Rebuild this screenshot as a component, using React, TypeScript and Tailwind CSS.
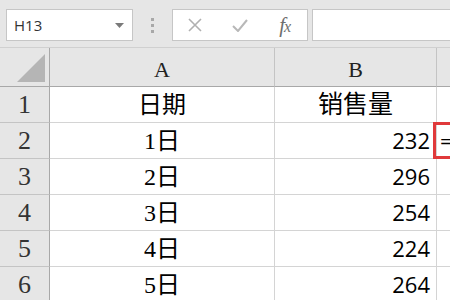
import React from 'react';

const rows = [
  { n: '1', a: '日期', b: '销售量' },
  { n: '2', a: '1日', b: '232' },
  { n: '3', a: '2日', b: '296' },
  { n: '4', a: '3日', b: '254' },
  { n: '5', a: '4日', b: '224' },
  { n: '6', a: '5日', b: '264' },
];

const serif = "font-['Liberation_Serif','Noto_Sans_CJK_SC',serif]";

const Toolbar: React.FC = () => (
  <div className="h-[48px] bg-[#e6e6e6] flex items-start pt-[9px] pl-[6px] border-b border-[#d0d0d0]">
    <div className="w-[127px] h-[32px] bg-white border border-[#c6c6c6] flex items-center justify-between pl-[7px] pr-[8px]">
      <span className="font-['Open_Sans',sans-serif] text-[15px] text-[#333]">H13</span>
      <svg width="9" height="5" viewBox="0 0 9 5">
        <path d="M0 0 L9 0 L4.5 5 Z" fill="#7a7a7a" />
      </svg>
    </div>
    <div className="w-[39px] h-[32px] flex flex-col items-center justify-center gap-[3px]">
      <div className="w-[3px] h-[3px] bg-[#a8a8a8]" />
      <div className="w-[3px] h-[3px] bg-[#a8a8a8]" />
      <div className="w-[3px] h-[3px] bg-[#a8a8a8]" />
    </div>
    <div className="w-[136px] h-[32px] bg-white border border-[#c6c6c6] flex items-center">
      <div className="w-[45px] flex justify-center">
        <svg width="14" height="14" viewBox="0 0 14 14">
          <path d="M1 1 L13 13 M13 1 L1 13" stroke="#b0b0b0" strokeWidth="1.6" fill="none" />
        </svg>
      </div>
      <div className="w-[45px] flex justify-center">
        <svg width="16" height="13" viewBox="0 0 16 13">
          <path d="M1 7 L6 12 L15 1" stroke="#b8b8b8" strokeWidth="2" fill="none" />
        </svg>
      </div>
      <div className="w-[45px] flex justify-center">
        <span className="font-['Liberation_Serif',serif] italic text-[21px] leading-none text-[#6e6e6e] tracking-[-1px]">
          f<span className="text-[16px]">x</span>
        </span>
      </div>
    </div>
    <div className="flex-1 ml-[4px] h-[32px] bg-white border border-[#c6c6c6] border-r-0" />
  </div>
);

const App: React.FC = () => {
  return (
    <div className="w-[450px] h-[300px] overflow-hidden bg-white relative">
      <Toolbar />
      <div className="grid grid-cols-[50px_225px_162px_1fr] grid-rows-[39px_36px_36px_36px_36px_36px_36px]">
        <div className="bg-[#e6e6e6] border-r border-b border-[#a8a8a8] flex items-end justify-end pr-[4px] pb-[4px]">
          <svg width="28" height="28" viewBox="0 0 28 28">
            <path d="M28 0 L28 28 L0 28 Z" fill="#b5b5b5" />
          </svg>
        </div>
        <div className={`bg-[#e6e6e6] border-r border-b border-r-[#c4c4c4] border-b-[#a8a8a8] flex items-center justify-center pt-[4px] ${serif} text-[22px] text-[#222]`}>A</div>
        <div className={`bg-[#e6e6e6] border-r border-b border-r-[#c4c4c4] border-b-[#a8a8a8] flex items-center justify-center pt-[4px] ${serif} text-[22px] text-[#222]`}>B</div>
        <div className="bg-[#e6e6e6] border-b border-[#a8a8a8]" />
        {rows.map((r) => (
          <React.Fragment key={r.n}>
            <div className={`bg-[#e6e6e6] border-r border-b border-r-[#a8a8a8] border-b-[#c4c4c4] flex items-center justify-center ${serif} text-[26px] text-[#333]`}>{r.n}</div>
            <div className={`border-r border-b border-[#d4d4d4] flex items-center justify-center ${serif} text-[24px] text-black`}>{r.a}</div>
            {r.n === '1' ? (
              <div className={`border-r border-b border-[#d4d4d4] flex items-center justify-center ${serif} text-[25px] text-black`}>{r.b}</div>
            ) : (
              <div className="border-r border-b border-[#d4d4d4] flex items-center justify-end pr-[6px] font-['Open_Sans',sans-serif] text-[22px] text-black">{r.b}</div>
            )}
            <div className="border-b border-[#d4d4d4]" />
          </React.Fragment>
        ))}
      </div>
      <div className="absolute left-[433px] top-[122px] w-[30px] h-[37px] border-[3px] border-[#e0393b] flex items-center pl-[4px] font-['Open_Sans',sans-serif] text-[22px] text-black">=</div>
    </div>
  );
};

export default App;
